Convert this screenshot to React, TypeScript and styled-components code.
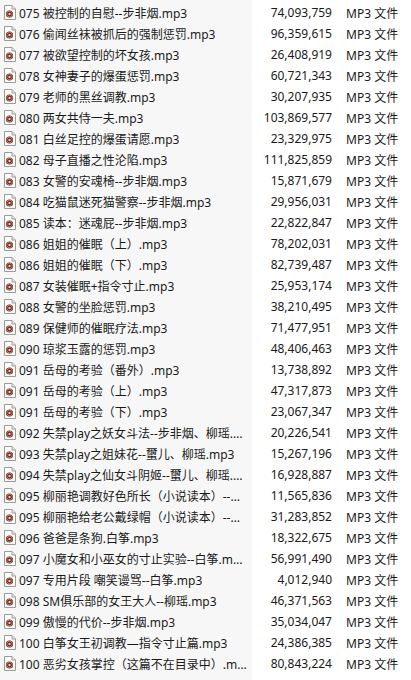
import styled, { createGlobalStyle } from 'styled-components'

const files: [string, string][] = [
    ['075 被控制的自慰--步非烟.mp3', '74,093,759'],
    ['076 偷闻丝袜被抓后的强制惩罚.mp3', '96,359,615'],
    ['077 被欲望控制的坏女孩.mp3', '26,408,919'],
    ['078 女神妻子的爆蛋惩罚.mp3', '60,721,343'],
    ['079 老师的黑丝调教.mp3', '30,207,935'],
    ['080 两女共侍一夫.mp3', '103,869,577'],
    ['081 白丝足控的爆蛋请愿.mp3', '23,329,975'],
    ['082 母子直播之性沦陷.mp3', '111,825,859'],
    ['083 女警的安魂椅--步非烟.mp3', '15,871,679'],
    ['084 吃猫鼠迷死猫警察--步非烟.mp3', '29,956,031'],
    ['085 读本：迷魂屁--步非烟.mp3', '22,822,847'],
    ['086 姐姐的催眠（上）.mp3', '78,202,031'],
    ['086 姐姐的催眠（下）.mp3', '82,739,487'],
    ['087 女装催眠+指令寸止.mp3', '25,953,174'],
    ['088 女警的坐脸惩罚.mp3', '38,210,495'],
    ['089 保健师的催眠疗法.mp3', '71,477,951'],
    ['090 琼浆玉露的惩罚.mp3', '48,406,463'],
    ['091 岳母的考验（番外）.mp3', '13,738,892'],
    ['091 岳母的考验（上）.mp3', '47,317,873'],
    ['091 岳母的考验（下）.mp3', '23,067,347'],
    ['092 失禁play之妖女斗法--步非烟、柳瑶.mp3', '20,226,541'],
    ['093 失禁play之姐妹花--蠒儿、柳瑶.mp3', '15,267,196'],
    ['094 失禁play之仙女斗阴姬--蠒儿、柳瑶.mp3', '16,928,887'],
    ['095 柳丽艳调教好色所长（小说读本）--步非烟.mp3', '11,565,836'],
    ['095 柳丽艳给老公戴绿帽（小说读本）--步非烟.mp3', '31,283,852'],
    ['096 爸爸是条狗.白筝.mp3', '18,322,675'],
    ['097 小魔女和小巫女的寸止实验--白筝.mp3', '56,991,490'],
    ['097 专用片段 嘲笑谩骂--白筝.mp3', '4,012,940'],
    ['098 SM俱乐部的女王大人--柳瑶.mp3', '46,371,563'],
    ['099 傲慢的代价--步非烟.mp3', '35,034,047'],
    ['100 白筝女王初调教—指令寸止篇.mp3', '24,386,385'],
    ['100 恶劣女孩掌控（这篇不在目录中）.mp3', '80,843,224'],
]

const Global = createGlobalStyle`
  html, body { margin: 0; padding: 0; background: #fff; }
  body {
    font-family: "Noto Sans", "Noto Sans CJK SC", sans-serif;
    font-size: 12px;
    color: #1a1a1a;
  }
`

const List = styled.div`
  width: 411px;
  height: 680px;
  overflow: hidden;
  padding-top: 2px;
  box-sizing: border-box;
  background: linear-gradient(to right, #f7f7f7 0, #f7f7f7 252px, #fff 252px);
`

const Row = styled.div`
  display: grid;
  grid-template-columns: 252px 80px 14px auto;
  height: 21px;
  align-items: center;
`

const NameCell = styled.div`
  display: flex;
  align-items: center;
  gap: 3px;
  padding-left: 4px;
  min-width: 0;
`

const Name = styled.span`
  white-space: nowrap;
  overflow: hidden;
  text-overflow: ellipsis;
  max-width: 228px;
`

const Size = styled.span`
  text-align: right;
  white-space: nowrap;
`

const Kind = styled.span`
  grid-column: 4;
  white-space: nowrap;
`

const Mp3Icon = () => (
    <svg width="12" height="15" viewBox="0 0 12 15" style={{ flex: 'none' }}>
        <path d="M0.5 0.5 H8 L11.5 4 V14.5 H0.5 Z" fill="#fff" stroke="#9a9a9a" />
        <path d="M8 0.5 V4 H11.5" fill="#e8e8e8" stroke="#9a9a9a" />
        <circle cx="5.5" cy="9" r="3.6" fill="#4a2a3a" />
        <circle cx="5.5" cy="9" r="2.8" fill="none" stroke="#e07a2a" strokeWidth="1" />
        <circle cx="5.5" cy="9" r="1.2" fill="#f0c0d8" />
    </svg>
)

export default function App() {
    return (
        <>
            <Global />
            <List>
                {files.map(([name, size], i) => (
                    <Row key={i}>
                        <NameCell>
                            <Mp3Icon />
                            <Name>{name}</Name>
                        </NameCell>
                        <Size>{size}</Size>
                        <Kind>MP3 文件</Kind>
                    </Row>
                ))}
            </List>
        </>
    )
}
